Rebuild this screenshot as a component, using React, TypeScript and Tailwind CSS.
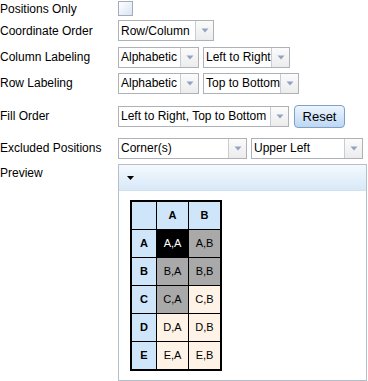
import React from "react";

const Arrow = () => (
  <svg width="8" height="5" viewBox="0 0 8 5" className="block">
    <path d="M0.5 0.5 H7.5 L4 4.5 Z" fill="#8fa4c2" />
  </svg>
);

function Select({ text, w }: { text: string; w: string }) {
  return (
    <div className={`flex h-[21px] border border-[#adb2b9] bg-white ${w}`}>
      <div className="flex-1 flex items-center pl-[2px] pr-1 whitespace-nowrap overflow-hidden">{text}</div>
      <div className="w-[18px] flex items-center justify-center border-l border-[#c9cdd2] bg-gradient-to-b from-[#fbfbfb] to-[#ececec]">
        <Arrow />
      </div>
    </div>
  );
}

function Row({ label, h, children }: { label: string; h: string; children: React.ReactNode }) {
  return (
    <div className={`flex items-center ${h}`}>
      <div className="w-[118px] shrink-0 whitespace-nowrap">{label}</div>
      <div className="flex items-center">{children}</div>
    </div>
  );
}

const cells: { t: string; c: string }[][] = [
  [
    { t: "A,A", c: "bg-black text-white" },
    { t: "A,B", c: "bg-[#a9a9a9]" },
  ],
  [
    { t: "B,A", c: "bg-[#a9a9a9]" },
    { t: "B,B", c: "bg-[#a9a9a9]" },
  ],
  [
    { t: "C,A", c: "bg-[#a9a9a9]" },
    { t: "C,B", c: "bg-[#fef3e6]" },
  ],
  [
    { t: "D,A", c: "bg-[#fef3e6]" },
    { t: "D,B", c: "bg-[#fef3e6]" },
  ],
  [
    { t: "E,A", c: "bg-[#fef3e6]" },
    { t: "E,B", c: "bg-[#fef3e6]" },
  ],
];

const rowLabels = ["A", "B", "C", "D", "E"];

export default function App() {
  return (
    <div
      className="w-[368px] h-[381px] bg-white text-black text-[12px] leading-[14px] overflow-hidden"
      style={{ fontFamily: '"Liberation Sans", Arial, sans-serif' }}
    >
      <Row label="Positions Only" h="h-[17px]">
        <div className="w-[15px] h-[15px] border border-[#a3acba] bg-gradient-to-br from-[#ffffff] to-[#d9e4f1]" />
      </Row>
      <Row label="Coordinate Order" h="h-[27px]">
        <Select text="Row/Column" w="w-[96px]" />
      </Row>
      <Row label="Column Labeling" h="h-[26px]">
        <div className="flex gap-[4px]">
          <Select text="Alphabetic" w="w-[81px]" />
          <Select text="Left to Right" w="w-[87px]" />
        </div>
      </Row>
      <Row label="Row Labeling" h="h-[26px]">
        <div className="flex gap-[4px]">
          <Select text="Alphabetic" w="w-[81px]" />
          <Select text="Top to Bottom" w="w-[96px]" />
        </div>
      </Row>
      <Row label="Fill Order" h="h-[40px]">
        <div className="flex items-center gap-[5px]">
          <Select text="Left to Right, Top to Bottom" w="w-[171px]" />
          <button className="h-[23px] w-[51px] rounded-[4px] border border-[#7f9fc4] bg-gradient-to-b from-[#eef5fd] to-[#bcd7f3] text-[13px] leading-[15px] text-black">
            Reset
          </button>
        </div>
      </Row>
      <Row label="Excluded Positions" h="h-[24px]">
        <div className="flex gap-[4px]">
          <Select text="Corner(s)" w="w-[129px]" />
          <Select text="Upper Left" w="w-[112px]" />
        </div>
      </Row>
      <div className="flex mt-[4px]">
        <div className="w-[118px] shrink-0 pt-[2px]">Preview</div>
        <div className="w-[249px] h-[217px] border border-[#b5bfca] flex flex-col">
          <div className="h-[26px] shrink-0 flex items-center pl-[8px] bg-gradient-to-b from-[#f4f9fe] to-[#d8e8f8] border-b border-[#d3e0ee]">
            <svg width="7" height="4" viewBox="0 0 7 4" className="block mt-[1px]">
              <path d="M0 0 H7 L3.5 4 Z" fill="#000" />
            </svg>
          </div>
          <div className="pl-[11px] pt-[9px]">
            <div className="inline-grid grid-cols-[24px_31px_31px] auto-rows-[27px] gap-px bg-black border-2 border-black text-[11px] leading-[13px]">
              <div className="bg-[#cfe5f9]" />
              <div className="bg-[#cfe5f9] flex items-center justify-center font-bold">A</div>
              <div className="bg-[#cfe5f9] flex items-center justify-center font-bold">B</div>
              {cells.map((r, i) => (
                <React.Fragment key={i}>
                  <div className="bg-[#cfe5f9] flex items-center justify-center font-bold">{rowLabels[i]}</div>
                  {r.map((c, j) => (
                    <div key={j} className={`${c.c} flex items-center justify-center`}>
                      {c.t}
                    </div>
                  ))}
                </React.Fragment>
              ))}
            </div>
          </div>
        </div>
      </div>
    </div>
  );
}
